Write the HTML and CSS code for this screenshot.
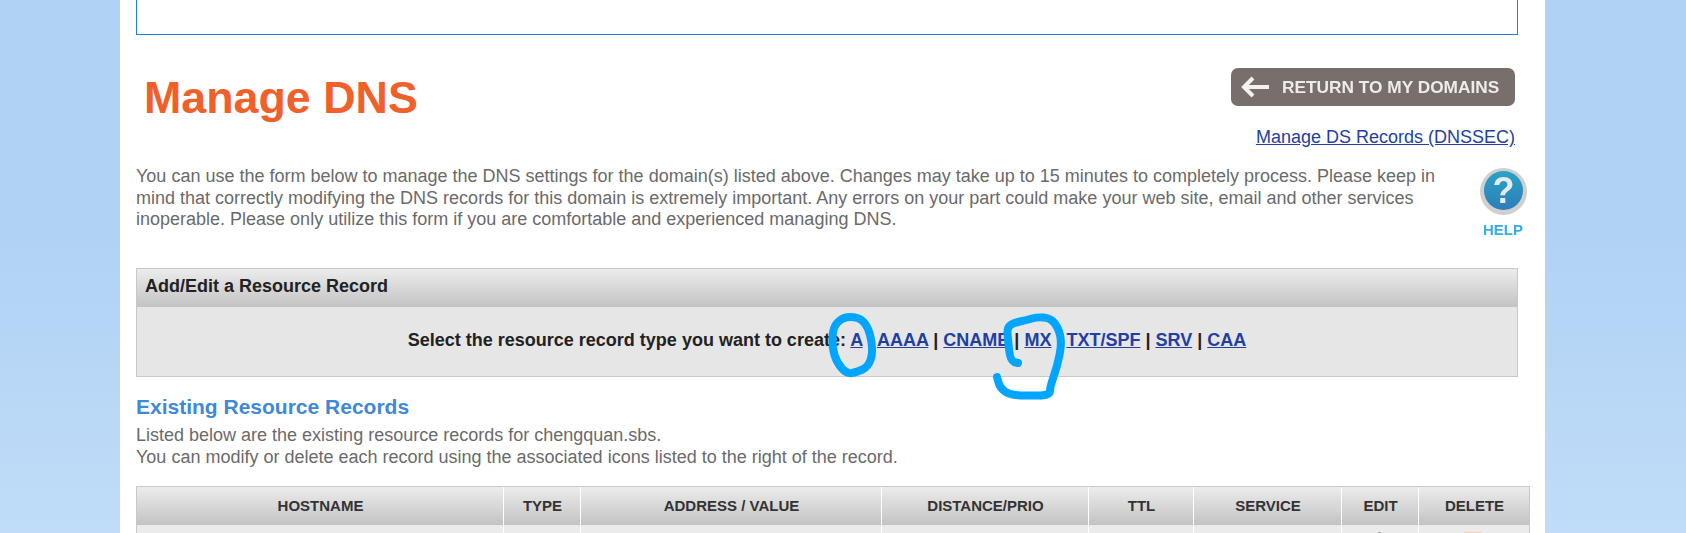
FILE: index.html
```html
<!DOCTYPE html>
<html lang="en">
<head>
<meta charset="utf-8">
<title>Manage DNS</title>
<link rel="stylesheet" href="styles.css">
</head>
<body>
<main class="panel">
  <div class="topbox"></div>
  <header class="head">
    <h1 class="title">Manage DNS</h1>
    <div class="actions">
      <a class="return" href="#">
        <svg class="return-arrow" width="29" height="22" viewBox="0 0 29 22"><path d="M12 2 3 11l9 9M3.500 11H28" fill="none" stroke="#f4f2f1" stroke-width="4"/></svg>
        <span>RETURN TO MY DOMAINS</span>
      </a>
      <a class="ds" href="#">Manage DS Records (DNSSEC)</a>
    </div>
  </header>
  <section class="intro">
    <p>You can use the form below to manage the DNS settings for the domain(s) listed above. Changes may take up to 15 minutes to completely process. Please keep in mind that correctly modifying the DNS records for this domain is extremely important. Any errors on your part could make your web site, email and other services inoperable. Please only utilize this form if you are comfortable and experienced managing DNS.</p>
    <a class="help" href="#">
      <svg width="47" height="47" viewBox="0 0 47 47">
        <defs><linearGradient id="hb" x1="0" y1="0" x2="0" y2="1"><stop offset="0" stop-color="#28a4c4"/><stop offset="1" stop-color="#2e7db9"/></linearGradient></defs>
        <circle cx="23.500" cy="23.500" r="23.500" fill="#cfcfcf"/>
        <circle cx="23.500" cy="22.500" r="19.500" fill="url(#hb)"/>
        <text class="help-q" x="23.500" y="35" text-anchor="middle">?</text>
      </svg>
      <span>HELP</span>
    </a>
  </section>
  <section class="add">
    <h2 class="add-head">Add/Edit a Resource Record</h2>
    <p class="add-body">Select the resource record type you want to create: <a href="#">A</a> | <a href="#">AAAA</a> | <a href="#">CNAME</a> | <a href="#">MX</a> | <a href="#">TXT/SPF</a> | <a href="#">SRV</a> | <a href="#">CAA</a></p>
  </section>
  <h3 class="existing">Existing Resource Records</h3>
  <p class="listed">Listed below are the existing resource records for chengquan.sbs.<br>You can modify or delete each record using the associated icons listed to the right of the record.</p>
  <div class="table">
    <div class="th c1">HOSTNAME</div><div class="th">TYPE</div><div class="th">ADDRESS / VALUE</div><div class="th">DISTANCE/PRIO</div><div class="th">TTL</div><div class="th">SERVICE</div><div class="th">EDIT</div><div class="th">DELETE</div>
    <div class="td c1"></div><div class="td"></div><div class="td"></div><div class="td"></div><div class="td"></div><div class="td"></div>
    <div class="td"><span class="edit-tip"></span></div>
    <div class="td"><span class="del-tip"></span></div>
  </div>
</main>
<svg class="ink" width="1686" height="533" viewBox="0 0 1686 533">
  <path d="M847 317.300Q852 316.500 857.500 318Q863 320 866.500 326Q870 332 871.500 342.500Q873 353 870.500 360Q868 367 862.500 369.500Q857 372 852 373Q847 374 842 368.500Q837 363 834.500 355Q832 347 832.500 337Q833 327 837.500 322.500Q842 318 847 317.300Z"/>
  <path d="M1018 363L1014 362Q1010 360 1009 349Q1008 340 1007.500 334Q1007 328 1010 325.500Q1013 323 1020 321.500Q1027 320 1032 318.500Q1037 317 1043.500 317.500Q1050 318 1054 322.500Q1058 327 1060 335Q1062 343 1059.500 355Q1057 367 1053.500 377Q1050 387 1050 391Q1050 395 1041 395.500L1021 395.500Q1010 395 1005 391.500Q1000 388 998.500 382.500L997 377"/>
</svg>
</body>
</html>
```
FILE: styles.css
```css
* { box-sizing: border-box; }
html, body { margin: 0; height: 533px; overflow: hidden; }
body {
  background: linear-gradient(#b0d2f5 0, #b0d2f5 230px, #c0dcf8 533px);
  font-family: "Liberation Sans", Arial, sans-serif;
  color: #6a6a6a;
  position: relative;
}
a { color: #233f9f; }
.panel {
  width: 1425px;
  height: 533px;
  margin-left: 120px;
  background: #fff;
  padding-left: 16px;
  overflow: hidden;
}
.topbox {
  width: 1382px;
  height: 35px;
  border: 1px solid #1f7fe0;
  border-top: 0;
  background: #fff;
}
.head {
  display: flex;
  justify-content: space-between;
  width: 1379px;
  height: 128px;
  padding-top: 33px;
}
.title {
  margin: 0 0 0 8px;
  font-size: 44.800px;
  line-height: 50px;
  padding-top: 4px;
  font-weight: 700;
  color: #f0602a;
}
.actions {
  display: flex;
  flex-direction: column;
  align-items: flex-end;
}
.return {
  display: flex;
  align-items: center;
  gap: 12px;
  width: 284px;
  height: 38px;
  padding-left: 10px;
  border-radius: 7px;
  background: #786e6c;
  color: #eeeceb;
  font-size: 17.300px;
  font-weight: 700;
  text-decoration: none;
}
.return-arrow, .return span { filter: blur(0.4px); }
.ds {
  margin-top: 21px;
  font-size: 18px;
  line-height: 21px;
}
.intro {
  display: flex;
  width: 1410px;
  height: 105px;
}
.intro p {
  margin: 3px 0 0;
  width: 1314px;
  font-size: 18px;
  line-height: 21.500px;
  flex: none;
}
.help {
  display: flex;
  flex-direction: column;
  align-items: center;
  margin-left: 18px;
  width: 70px;
  text-decoration: none;
  color: #39ade3;
  font-size: 15px;
  font-weight: 700;
}
.help svg { display: block; margin-top: 5px; filter: blur(0.5px); }
.help span { margin-top: 7px; line-height: 16px; filter: blur(0.3px); }
.help-q { font: 700 36px "Liberation Sans", sans-serif; fill: #e4ebed; }
.add {
  width: 1382px;
  height: 109px;
  border: 1px solid #c8c8c8;
  background: #e6e6e6;
}
.add-head {
  margin: 0;
  height: 38px;
  padding-left: 8px;
  font-size: 18px;
  line-height: 35px;
  font-weight: 700;
  color: #222;
  background: linear-gradient(#ececec, #c3c3c3);
}
.add-body {
  margin: 0;
  text-align: center;
  font-size: 18px;
  font-weight: 700;
  line-height: 66px;
  color: #222;
}
.existing {
  margin: 18px 0 0;
  font-size: 21px;
  line-height: 24px;
  font-weight: 700;
  color: #4088d8;
}
.listed {
  margin: 6px 0 0;
  font-size: 18px;
  line-height: 21.500px;
}
.table {
  display: grid;
  grid-template-columns: 366px 77px 301px 207px 105px 148px 77px 111px;
  width: 1394px;
  margin-top: 18px;
  border: 1px solid #c8c8c8;
  border-bottom: 0;
  background: #ebebeb;
}
.th {
  height: 38px;
  padding-left: 1px;
  text-align: center;
  font-size: 15px;
  font-weight: 700;
  line-height: 38px;
  color: #333;
  border-left: 1px solid #fff;
  background: linear-gradient(#ececec, #c3c3c3);
}
.td {
  position: relative;
  height: 40px;
  border-left: 1px solid #fff;
}
.c1 { border-left: 0; }
.edit-tip {
  position: absolute;
  left: 36px;
  top: 7px;
  width: 3px;
  height: 12px;
  border-radius: 2px;
  background: #888;
}
.del-tip {
  position: absolute;
  left: 44px;
  top: 7px;
  width: 20px;
  height: 12px;
  border-radius: 3px 3px 0 0;
  background: #f7cfa8;
}
.ink {
  position: absolute;
  left: 0;
  top: 0;
  pointer-events: none;
}
.ink path {
  fill: none;
  stroke: #00a5ff;
  stroke-width: 8;
  stroke-linecap: round;
  stroke-linejoin: round;
}
```
